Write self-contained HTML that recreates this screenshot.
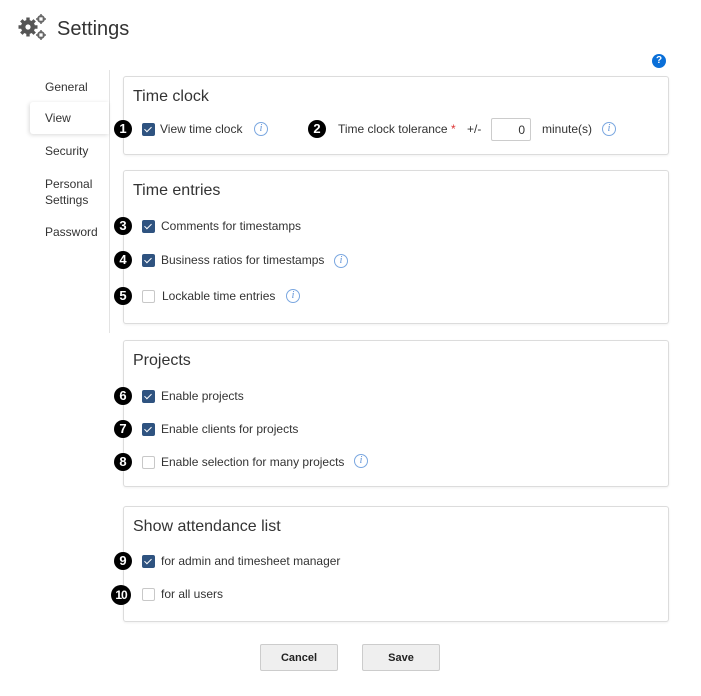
<!DOCTYPE html>
<html><head><style>
body{margin:0;width:701px;height:696px;background:#fff;font-family:"Liberation Sans",sans-serif;color:#333;position:relative;overflow:hidden}
.a{position:absolute}
.t{font-size:12px;color:#333;white-space:nowrap}
.panel{position:absolute;left:123px;width:544px;border:1px solid #dcdcdc;border-radius:3px;background:#fff;box-shadow:0 1px 2px rgba(0,0,0,.06)}
.h{position:absolute;left:133px;font-size:16px;color:#333}
.b{position:absolute;width:18px;height:18px;border-radius:50%;background:#000;color:#fff;font-weight:900;font-size:13px;text-align:center;line-height:18px}
.cb{position:absolute;left:142px;width:11px;height:11px;border:1px solid #c8c8c8;border-radius:2px;background:#fff}
.cb.on{background:#2f5380;border-color:#2f5380}
.cb.on:after{content:"";position:absolute;left:3px;top:1px;width:3px;height:6px;border:solid #fff;border-width:0 1.6px 1.6px 0;transform:rotate(45deg)}
.i{position:absolute;width:12px;height:12px;border:1px solid #7aa7e0;border-radius:50%;color:#5b8fd6;font-family:"Liberation Serif",serif;font-style:italic;font-size:10px;text-align:center;line-height:12px}
.nav{position:absolute;left:45px;font-size:12px;color:#333}
.btn{position:absolute;top:644px;width:76px;height:25px;border:1px solid #ccc;border-radius:2px;background:#efefef;font-size:11px;font-weight:bold;text-align:center;line-height:27px;color:#222}
</style></head><body>
<svg class="a" style="left:18px;top:12px" width="30" height="30" viewBox="0 0 30 30">
<g fill="#555"><circle cx="10" cy="15" r="7"/><g stroke="#555" stroke-width="3.4"><line x1="10" y1="5.5" x2="10" y2="24.5"/><line x1="0.5" y1="15" x2="19.5" y2="15"/><line x1="3.3" y1="8.3" x2="16.7" y2="21.7"/><line x1="3.3" y1="21.7" x2="16.7" y2="8.3"/></g></g>
<circle cx="10" cy="15" r="2.6" fill="#fff"/>
<g fill="none" stroke="#666" stroke-width="1.8"><circle cx="23" cy="7" r="3"/><circle cx="23" cy="23" r="3"/></g>
<g stroke="#666" stroke-width="1.5"><line x1="23" y1="2" x2="23" y2="12"/><line x1="18" y1="7" x2="28" y2="7"/><line x1="23" y1="18" x2="23" y2="28"/><line x1="18" y1="23" x2="28" y2="23"/></g>
<circle cx="23" cy="7" r="1.6" fill="#fff"/><circle cx="23" cy="23" r="1.6" fill="#fff"/>
</svg>
<div class="a" style="left:57px;top:18px;font-size:20px;color:#333">Settings</div>
<div class="a" style="left:652px;top:54px;width:14px;height:14px;border-radius:50%;background:#0a6fd8;color:#fff;font-size:10px;font-weight:bold;text-align:center;line-height:14px">?</div>

<div class="a" style="left:109px;top:70px;width:1px;height:263px;background:#e3e3e3"></div>
<div class="a" style="left:30px;top:102px;width:79px;height:32px;background:#fff;border-radius:3px 0 0 3px;box-shadow:-1px 1px 4px rgba(0,0,0,.15)"></div>
<div class="nav" style="top:80px">General</div>
<div class="nav" style="top:111px">View</div>
<div class="nav" style="top:144px">Security</div>
<div class="nav" style="top:176px;line-height:16px">Personal<br>Settings</div>
<div class="nav" style="top:225px">Password</div>

<div class="panel" style="top:76px;height:77px"></div>
<div class="h" style="top:88px">Time clock</div>
<div class="b" style="left:114px;top:120px">1</div>
<div class="cb on" style="top:123px"></div>
<div class="a t" style="left:160px;top:122px">View time clock</div>
<div class="i" style="left:254px;top:122px">i</div>
<div class="b" style="left:308px;top:120px">2</div>
<div class="a t" style="left:338px;top:122px">Time clock tolerance <span style="color:#d33">*</span></div>
<div class="a t" style="left:467px;top:122px">+/-</div>
<div class="a" style="left:491px;top:118px;width:40px;height:23px;border:1px solid #ccc;border-radius:2px;font-size:12px;text-align:right;line-height:22px;box-sizing:border-box;padding-right:5px">0</div>
<div class="a t" style="left:542px;top:122px">minute(s)</div>
<div class="i" style="left:602px;top:122px">i</div>

<div class="panel" style="top:170px;height:152px"></div>
<div class="h" style="top:182px">Time entries</div>
<div class="b" style="left:114px;top:217px">3</div>
<div class="cb on" style="top:220px"></div>
<div class="a t" style="left:161px;top:219px">Comments for timestamps</div>
<div class="b" style="left:114px;top:251px">4</div>
<div class="cb on" style="top:254px"></div>
<div class="a t" style="left:161px;top:253px">Business ratios for timestamps</div>
<div class="i" style="left:334px;top:254px">i</div>
<div class="b" style="left:114px;top:287px">5</div>
<div class="cb" style="top:290px"></div>
<div class="a t" style="left:162px;top:289px">Lockable time entries</div>
<div class="i" style="left:286px;top:289px">i</div>

<div class="panel" style="top:340px;height:145px"></div>
<div class="h" style="top:352px">Projects</div>
<div class="b" style="left:114px;top:387px">6</div>
<div class="cb on" style="top:390px"></div>
<div class="a t" style="left:161px;top:389px">Enable projects</div>
<div class="b" style="left:114px;top:420px">7</div>
<div class="cb on" style="top:423px"></div>
<div class="a t" style="left:161px;top:422px">Enable clients for projects</div>
<div class="b" style="left:114px;top:453px">8</div>
<div class="cb" style="top:456px"></div>
<div class="a t" style="left:161px;top:455px">Enable selection for many projects</div>
<div class="i" style="left:354px;top:454px">i</div>

<div class="panel" style="top:506px;height:114px"></div>
<div class="h" style="top:518px">Show attendance list</div>
<div class="b" style="left:114px;top:552px">9</div>
<div class="cb on" style="top:555px"></div>
<div class="a t" style="left:161px;top:554px">for admin and timesheet manager</div>
<div class="b" style="left:111px;top:585px;width:20px;height:20px;line-height:20px;font-size:12px;letter-spacing:-1px">10</div>
<div class="cb" style="top:588px"></div>
<div class="a t" style="left:161px;top:587px">for all users</div>

<div class="btn" style="left:260px">Cancel</div>
<div class="btn" style="left:362px">Save</div>
</body></html>
